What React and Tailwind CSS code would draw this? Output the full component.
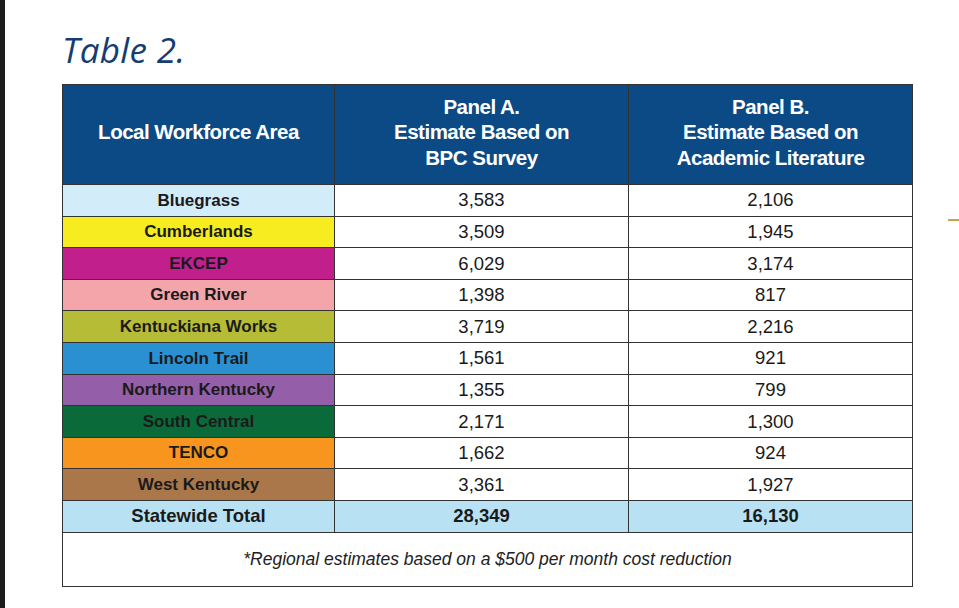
const rows = [
  { name: "Bluegrass", a: "3,583", b: "2,106", bg: "bg-[#d3ecf9]" },
  { name: "Cumberlands", a: "3,509", b: "1,945", bg: "bg-[#f7ec1f]" },
  { name: "EKCEP", a: "6,029", b: "3,174", bg: "bg-[#c1208c]" },
  { name: "Green River", a: "1,398", b: "817", bg: "bg-[#f4a5aa]" },
  { name: "Kentuckiana Works", a: "3,719", b: "2,216", bg: "bg-[#b6bc36]" },
  { name: "Lincoln Trail", a: "1,561", b: "921", bg: "bg-[#2b90d2]" },
  { name: "Northern Kentucky", a: "1,355", b: "799", bg: "bg-[#955ea8]" },
  { name: "South Central", a: "2,171", b: "1,300", bg: "bg-[#0b6a3a]" },
  { name: "TENCO", a: "1,662", b: "924", bg: "bg-[#f7951f]" },
  { name: "West Kentucky", a: "3,361", b: "1,927", bg: "bg-[#a9774a]" },
];

export default function App() {
  return (
    <div className="relative w-[959px] h-[608px] bg-white overflow-hidden flex" style={{ fontFamily: '"Liberation Sans", Arial, sans-serif' }}>
      <div className="w-[5px] h-full bg-[#1c1c1c]" />
      <div className="flex flex-col pl-[57px] pt-[28px]">
        <h1 className="text-[35px] italic text-[#143d73] leading-[44px] tracking-[0.3px] mb-[12px]" style={{ fontFamily: '"Open Sans", Lato, sans-serif' }}>
          Table 2.
        </h1>
        <table className="border-collapse w-[850px] table-fixed border-[1.5px] border-[#333]">
          <colgroup>
            <col className="w-[272px]" />
            <col className="w-[294px]" />
            <col className="w-[284px]" />
          </colgroup>
          <thead>
            <tr className="h-[100px] bg-[#0c4a85] text-white font-bold text-[20.5px] leading-[25.5px] tracking-[-0.5px]">
              <th className="border-[1.5px] border-[#333] pb-[5px]">Local Workforce Area</th>
              <th className="border-[1.5px] border-[#333] pb-[5px]">
                Panel A.<br />Estimate Based on<br />BPC Survey
              </th>
              <th className="border-[1.5px] border-[#333] pb-[5px]">
                Panel B.<br />Estimate Based on<br />Academic Literature
              </th>
            </tr>
          </thead>
          <tbody className="text-[18.5px] text-[#1a1a1a]">
            {rows.map((r) => (
              <tr key={r.name} className="h-[31.6px]">
                <td className={`${r.bg} border-[1.5px] border-[#333] text-center font-bold text-[17px]`}>{r.name}</td>
                <td className="border-[1.5px] border-[#333] text-center">{r.a}</td>
                <td className="border-[1.5px] border-[#333] text-center">{r.b}</td>
              </tr>
            ))}
            <tr className="h-[31.6px] bg-[#b8e2f3] font-bold">
              <td className="border-[1.5px] border-[#333] text-center text-[18.5px]">Statewide Total</td>
              <td className="border-[1.5px] border-[#333] text-center">28,349</td>
              <td className="border-[1.5px] border-[#333] text-center">16,130</td>
            </tr>
            <tr className="h-[54px]">
              <td colSpan={3} className="border-[1.5px] border-[#333] text-center italic text-[17.5px] text-[#222]">
                *Regional estimates based on a $500 per month cost reduction
              </td>
            </tr>
          </tbody>
        </table>
      </div>
      <div className="absolute left-[948px] top-[219px] w-[11px] h-[2px] bg-[#caa24c]" />
    </div>
  );
}
